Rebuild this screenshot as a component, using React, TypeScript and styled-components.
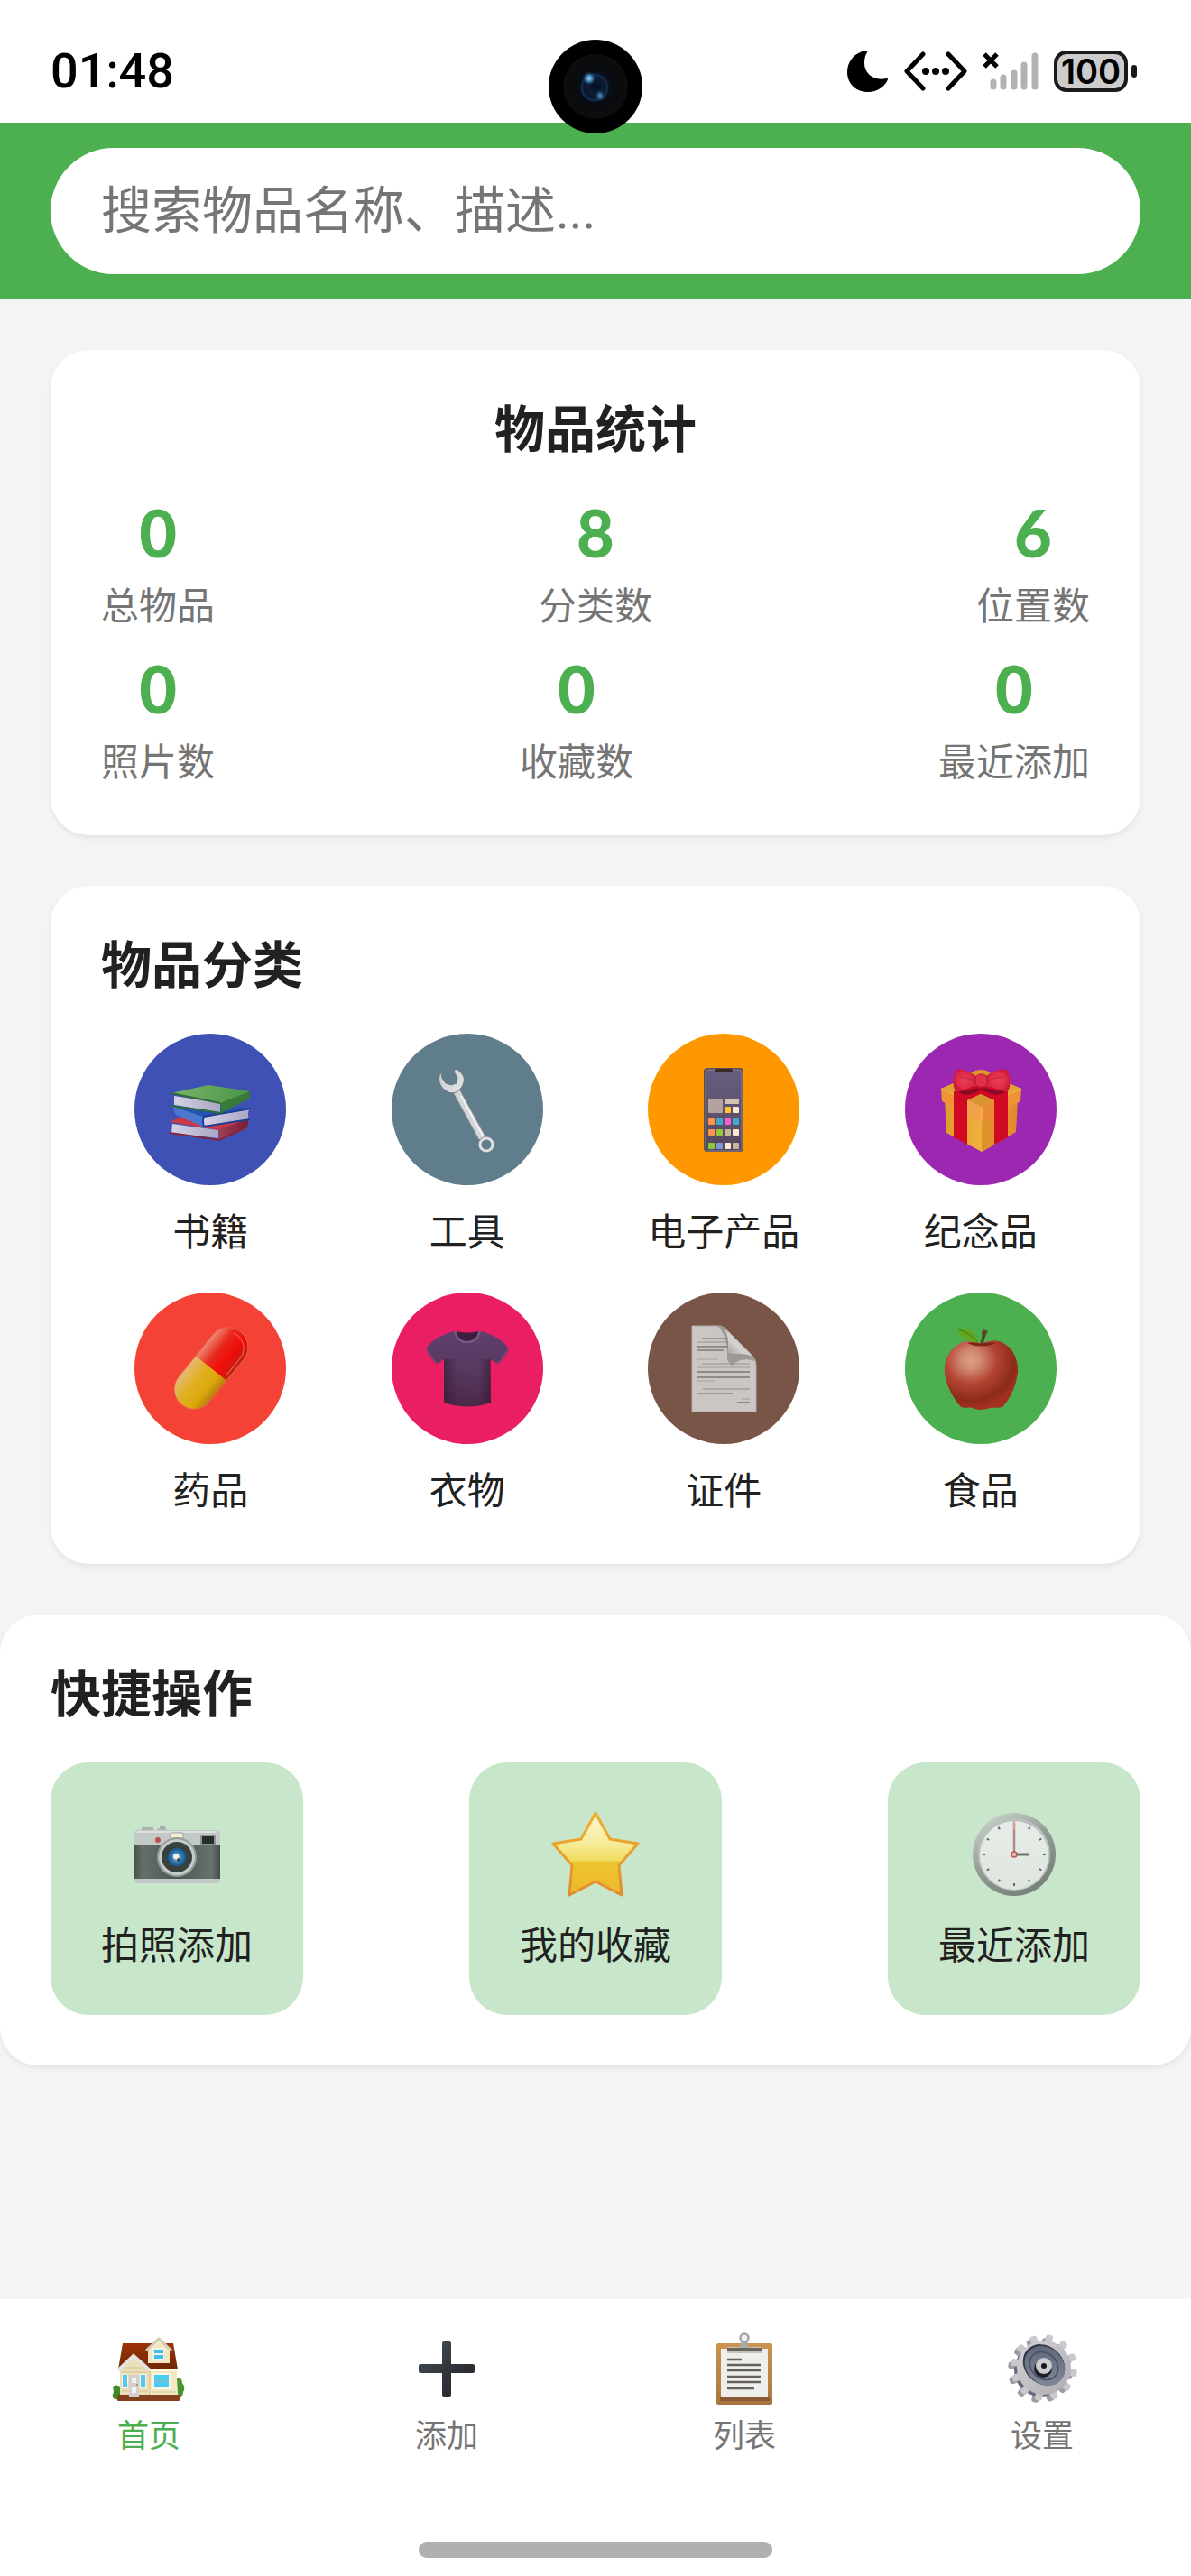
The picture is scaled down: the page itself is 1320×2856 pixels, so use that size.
import React, { useState } from 'react';
import styled, { createGlobalStyle } from 'styled-components';

const stats = [
  [
    { label: '总物品', value: 0 },
    { label: '分类数', value: 8 },
    { label: '位置数', value: 6 },
  ],
  [
    { label: '照片数', value: 0 },
    { label: '收藏数', value: 0 },
    { label: '最近添加', value: 0 },
  ],
];

const BooksIcon = () => (
  <svg viewBox="0 0 98 98" aria-hidden="true">
    <defs>
      <linearGradient id="bookGreen" x1="0" x2="1">
        <stop offset="0" stopColor="#78b468" />
        <stop offset="1" stopColor="#4a9648" />
      </linearGradient>
      <linearGradient id="bookRed" x1="0" x2="1">
        <stop offset="0" stopColor="#a04058" />
        <stop offset="1" stopColor="#7c1c34" />
      </linearGradient>
      <linearGradient id="bookPages" x1="0" x2="1">
        <stop offset="0" stopColor="#d4d2e6" />
        <stop offset="1" stopColor="#a9a7c2" />
      </linearGradient>
    </defs>
    <path d="M4 63 L14 58 L48 64 L92 59 L59 72 Z" fill="#c8394a" />
    <path d="M58 71 L91 60 Q92 65 89 69 L59 83 Z" fill="url(#bookRed)" />
    <path d="M7 65 L58 72 L58 81 L6 75 Z" fill="url(#bookPages)" />
    <path d="M4 75 L59 83 L89 69" fill="none" stroke="#86243c" strokeWidth="2" />
    <path d="M8 46 L40 42 L94 48 L41 58 Z" fill="#2455b4" />
    <path d="M8 46 L41 57 L41 68 L11 55 Q8 51 8 46 Z" fill="#4a78cf" />
    <path d="M42 57 L92 49 Q90 54 92 60 L42 67 Z" fill="url(#bookPages)" />
    <path d="M94 48 L42 57 Q40 62 42 68 L93 60" fill="none" stroke="#1c3f94" strokeWidth="2" />
    <path d="M60 41 L93 29 L93 37 L61 53 Z" fill="#377a39" />
    <path d="M9 34 L60 42 L60 52 L9 44 Z" fill="url(#bookPages)" />
    <path d="M6 31 L47 22 L93 29 L60 42 Z" fill="url(#bookGreen)" />
    <path d="M6 45 L60 53 L63 52 M6 31 L60 42" fill="none" stroke="#2f6c35" strokeWidth="2" />
  </svg>
);

const WrenchIcon = () => (
  <svg viewBox="0 0 98 98" aria-hidden="true">
    <defs>
      <linearGradient id="steel" x1="0" y1="0" x2="1" y2="1">
        <stop offset="0" stopColor="#c4c8cb" />
        <stop offset="1" stopColor="#e6e8ea" />
      </linearGradient>
    </defs>
    <path d="M32 28 L40 26 L69 79 L62 83 Z" fill="#d3d7da" stroke="#84898c" strokeWidth="1" />
    <path
      d="M20 8 C15 14 18 24 25 28 C28 31 34 32 38 29 C45 24 47 16 44 11 C42 8 39 5 36 4 L34 7 L38 14 L37 20 L31 22 L25 20 L21 14 Z"
      fill="url(#steel)"
      stroke="#6e7679"
      strokeWidth="1"
    />
    <path d="M42 34 L66 78" stroke="#f0f2f3" strokeWidth="2" />
    <circle cx="70" cy="88" r="7" fill="none" stroke="#777e82" strokeWidth="4" />
    <circle cx="70" cy="88" r="7" fill="none" stroke="#dde0e2" strokeWidth="3" />
  </svg>
);

const phoneApps = [
  [50, 46, '#ffc530'], [59, 46, '#fce8d0'],
  [32, 59, '#ff944d'], [41, 59, '#40a8c8'], [50, 59, '#f060d0'], [59, 59, '#40a8c8'],
  [32, 71, '#ff944d'], [41, 71, '#8fc93a'], [50, 71, '#c8b49c'], [59, 71, '#fce8d0'],
  [32, 86, '#8fc93a'], [41, 86, '#7a98d0'], [50, 86, '#fce8d0'], [59, 86, '#c8b49c'],
] as const;

const PhoneIcon = () => (
  <svg viewBox="0 0 98 98" aria-hidden="true">
    <defs>
      <linearGradient id="phoneScreen" x1="0" y1="0" x2="0" y2="1">
        <stop offset="0" stopColor="#685c80" />
        <stop offset="1" stopColor="#54485e" />
      </linearGradient>
    </defs>
    <rect x="27" y="3" width="44" height="93" rx="4" fill="#5c4d4e" />
    <rect x="29" y="5" width="40" height="90" rx="3" fill="url(#phoneScreen)" stroke="#8a7f92" strokeWidth="1" />
    <rect x="39" y="4" width="20" height="4" rx="2" fill="#3a2a26" />
    <rect x="32" y="37" width="16" height="16" rx="1" fill="#b3a29f" />
    <rect x="50" y="37" width="16" height="6" rx="1" fill="#d5c2b0" />
    {phoneApps.map(([x, y, fill]) => (
      <rect key={`${x}-${y}`} x={x} y={y} width="7" height="7" rx="1" fill={fill} />
    ))}
  </svg>
);

const GiftIcon = () => (
  <svg viewBox="0 0 98 98" aria-hidden="true">
    <defs>
      <linearGradient id="boxSide" x1="0" x2="1">
        <stop offset="0" stopColor="#e39a2c" />
        <stop offset="0.5" stopColor="#eeb03e" />
        <stop offset="1" stopColor="#e2862a" />
      </linearGradient>
      <radialGradient id="bowRed">
        <stop offset="0" stopColor="#ea4058" />
        <stop offset="0.7" stopColor="#e02c48" />
        <stop offset="1" stopColor="#cc1a38" />
      </radialGradient>
    </defs>
    <path d="M9 38 L90 38 L88 74 L50 96 L11 75 Z" fill="url(#boxSide)" />
    <path d="M50 62 L64 54 L64 88 L50 96 Z" fill="#e0912c" />
    <path d="M5 26 L49 7 L94 26 L93 40 L50 63 L6 40 Z" fill="#f09238" />
    <path d="M5 26 L49 7 L94 26 L50 46 Z" fill="#e2a336" />
    <path d="M5 26 L50 46 L94 26" fill="none" stroke="#f6b83a" strokeWidth="1" />
    <path d="M19 29 L49 21 L79 29 L79 80 L64 88 L64 39 L49 32 L34 39 L34 88 L19 80 Z" fill="#cf0a22" />
    <path d="M34 39 L49 32 L64 39 L50 46 Z" fill="#d99433" />
    <path d="M34 39 L50 46 L50 63 L34 55 Z" fill="#f3a04a" />
    <path d="M64 39 L50 46 L50 63 L64 55 Z" fill="#ea8a34" />
    <path d="M50 46 V62" stroke="#fbc244" strokeWidth="1" />
    <path d="M24 30 Q49 21 76 30 Q66 35 56 30 L49 27 L42 31 Q32 35 24 30 Z" fill="#8c0a28" />
    <path d="M38 8 Q49 2 60 8 L56 12 H42 Z" fill="#dd9a2c" />
    <path d="M22 5 C28 3 38 8 44 12 L44 22 C36 25 28 29 21 29 C17 22 18 12 22 5 Z" fill="url(#bowRed)" />
    <path d="M78 5 C71 3 61 8 55 12 L55 22 C62 25 71 29 79 29 C83 22 82 12 78 5 Z" fill="url(#bowRed)" />
    <path d="M26 13 Q34 14 43 17 M73 13 Q64 14 56 17" fill="none" stroke="#c42440" strokeWidth="1" />
    <rect x="43" y="10" width="13" height="14" rx="5" fill="#e0304a" stroke="#b31a34" strokeWidth="1" />
  </svg>
);

const PillIcon = () => (
  <svg viewBox="0 0 98 98" aria-hidden="true">
    <defs>
      <linearGradient id="pillRed" x1="0" y1="0" x2="0" y2="1">
        <stop offset="0" stopColor="#ee8a74" />
        <stop offset="0.35" stopColor="#e8281e" />
        <stop offset="0.7" stopColor="#f00c08" />
        <stop offset="1" stopColor="#b82418" />
      </linearGradient>
      <linearGradient id="pillYellow" x1="0" y1="0" x2="0" y2="1">
        <stop offset="0" stopColor="#e8b878" />
        <stop offset="0.4" stopColor="#e0b020" />
        <stop offset="0.75" stopColor="#dba80c" />
        <stop offset="1" stopColor="#b87c0c" />
      </linearGradient>
    </defs>
    <g transform="rotate(-51 50 49)">
      <path d="M50 27 H80 A22 22 0 0 1 80 71 H50 Z" fill="url(#pillRed)" />
      <path d="M50 27 H20 A22 22 0 0 0 20 71 H50 Z" fill="url(#pillYellow)" />
      <rect x="-2" y="27" width="104" height="44" rx="22" fill="none" stroke="#e8604a" strokeWidth="1" />
      <path d="M54 67 H79 A18 18 0 0 0 96 44" fill="none" stroke="#f4685c" strokeWidth="1" />
    </g>
  </svg>
);

const ShirtIcon = () => (
  <svg viewBox="0 0 98 98" aria-hidden="true">
    <defs>
      <linearGradient id="shirtBody" x1="0" y1="0" x2="0" y2="1">
        <stop offset="0" stopColor="#60406c" />
        <stop offset="0.5" stopColor="#573860" />
        <stop offset="1" stopColor="#4a2848" />
      </linearGradient>
      <linearGradient id="shirtShade" x1="0" x2="1">
        <stop offset="0" stopColor="#30142c" stopOpacity="0.5" />
        <stop offset="0.3" stopColor="#30142c" stopOpacity="0" />
        <stop offset="0.75" stopColor="#30142c" stopOpacity="0" />
        <stop offset="1" stopColor="#30142c" stopOpacity="0.5" />
      </linearGradient>
    </defs>
    <path
      d="M34 8 C20 12 9 17 3 28 Q8 38 15 44 L23 39 L23 87 Q49 96 75 87 L74 39 L83 44 Q90 38 95 28 C89 17 78 12 64 8 Q49 14 34 8 Z"
      fill="url(#shirtBody)"
    />
    <path d="M23 39 H75 V87 Q49 96 23 87 Z" fill="url(#shirtShade)" />
    <path d="M37 8 Q49 11 61 8 Q59 19 49 19 Q39 19 37 8 Z" fill="#3c2040" />
    <path d="M35 8 Q38 20 49 20 Q60 20 63 8" fill="none" stroke="#7c5a86" strokeWidth="2" />
    <path d="M4 28 Q9 36 15 43 M94 28 Q89 36 83 43" fill="none" stroke="#7a5684" strokeWidth="1" />
  </svg>
);

const docLines = [
  [25, 54, 16, '#8b8785'], [19, 54, 20, '#aaa5a3'], [19, 54, 25, '#7f7b79'], [19, 49, 29, '#7f7b79'],
  [19, 43, 39, '#b4afad'], [25, 78, 44, '#aaa5a3'], [19, 78, 48, '#b0abaa'], [19, 78, 53, '#7a7674'],
  [19, 78, 59, '#7a7674'], [19, 39, 63, '#b0abaa'], [26, 78, 72, '#a39e9c'], [19, 59, 77, '#8b8785'],
  [69, 78, 83, '#b0abaa'], [64, 78, 87, '#7a7674'],
] as const;

const DocumentIcon = () => (
  <svg viewBox="0 0 98 98" aria-hidden="true">
    <defs>
      <linearGradient id="foldShade" x1="0" y1="1" x2="1" y2="0">
        <stop offset="0" stopColor="#8c8886" />
        <stop offset="0.4" stopColor="#d6d2d1" />
        <stop offset="1" stopColor="#b9b5b4" />
      </linearGradient>
    </defs>
    <path
      d="M14 2 H46 Q51 4 54 8 L80 34 Q85 39 85 45 V97 H14 Z"
      fill="#cbc5c4"
      stroke="#b4adab"
      strokeWidth="1"
    />
    {docLines.map(([x1, x2, y, stroke]) => (
      <line key={y} x1={x1} x2={x2} y1={y} y2={y} stroke={stroke} strokeWidth="1.5" />
    ))}
    <path d="M42 2 Q54 12 53 40 L58 46 Q68 36 85 41 L80 34 L54 32 L54 8 L47 2 Z" fill="#8d8988" opacity="0.75" />
    <path d="M49 4 Q56 14 54 32 Q68 30 81 36 Z" fill="url(#foldShade)" />
  </svg>
);

const AppleIcon = () => (
  <svg viewBox="0 0 98 98" aria-hidden="true">
    <defs>
      <radialGradient id="appleSkin" cx="0.36" cy="0.28" r="0.7">
        <stop offset="0" stopColor="#dca088" />
        <stop offset="0.2" stopColor="#d08872" />
        <stop offset="0.5" stopColor="#b44432" />
        <stop offset="0.85" stopColor="#8c2a1a" />
        <stop offset="1" stopColor="#a43020" />
      </radialGradient>
    </defs>
    <path
      d="M49 22 C42 17 33 18 27 21 C14 27 8 40 9 54 C10 68 20 84 26 91 C32 95 36 91 40 93 C46 96 54 95 59 93 C64 92 69 94 74 91 C82 82 88 68 90 54 C91 40 85 26 72 20 C64 17 56 19 49 22 Z"
      fill="url(#appleSkin)"
    />
    <path d="M34 21 Q49 28 66 21 Q58 19 49 22 Q42 19 34 21 Z" fill="#7c2418" />
    <path d="M48 22 Q51 14 50 9 L52 6 L57 8 Q53 14 52 22 Z" fill="#5c4428" />
    <path d="M23 6 C33 3 45 8 46 20 C36 21 27 16 23 6 Z" fill="#62a81e" />
    <path d="M24 6 Q36 9 46 20" fill="none" stroke="#3f7c14" strokeWidth="1" />
  </svg>
);

const CameraIcon = () => (
  <svg viewBox="0 0 98 98" aria-hidden="true">
    <defs>
      <linearGradient id="leather" x1="0" x2="1">
        <stop offset="0" stopColor="#4a524e" />
        <stop offset="0.1" stopColor="#66706b" />
        <stop offset="0.5" stopColor="#4c5550" />
        <stop offset="0.9" stopColor="#68726d" />
        <stop offset="1" stopColor="#454d49" />
      </linearGradient>
      <radialGradient id="lensGlass">
        <stop offset="0" stopColor="#f4f4ee" />
        <stop offset="0.3" stopColor="#82a4bc" />
        <stop offset="0.5" stopColor="#2c7cb8" />
        <stop offset="0.9" stopColor="#1f567f" />
        <stop offset="1" stopColor="#2c3c44" />
      </radialGradient>
    </defs>
    <rect x="10" y="19" width="13" height="5" rx="1" fill="#aab2ae" />
    <rect x="27" y="20" width="11" height="4" fill="#b6beba" />
    <rect x="30" y="18" width="6" height="3" fill="#a3aca7" />
    <rect x="2" y="22" width="95" height="59" rx="4" fill="#c3c9c6" />
    <rect x="2" y="39" width="95" height="37" fill="url(#leather)" />
    <path d="M5 24 H94" stroke="#dde2df" strokeWidth="2" />
    <rect x="42" y="25" width="14" height="6" rx="1" fill="#f6efcf" stroke="#98a09b" strokeWidth="1" />
    <circle cx="28" cy="33" r="3" fill="#b8504c" />
    <rect x="75" y="27" width="17" height="11" fill="#8d9591" />
    <rect x="77" y="29" width="13" height="8" fill="#262d2a" />
    <circle cx="49" cy="52" r="22" fill="#959d99" />
    <circle cx="49" cy="52" r="20" fill="#c5cbc8" />
    <circle cx="49" cy="52" r="17" fill="#39413e" />
    <circle cx="49" cy="52" r="11" fill="url(#lensGlass)" />
    <circle cx="51" cy="55" r="2" fill="#38454c" />
    <circle cx="48" cy="51" r="3" fill="#f6f4ea" />
  </svg>
);

const StarIcon = () => (
  <svg viewBox="0 0 98 98" aria-hidden="true">
    <defs>
      <linearGradient id="starFill" x1="0" y1="0" x2="0" y2="1">
        <stop offset="0" stopColor="#fbf6d2" />
        <stop offset="0.35" stopColor="#f7ee9e" />
        <stop offset="0.58" stopColor="#f0dc5e" />
        <stop offset="0.6" stopColor="#edc430" />
        <stop offset="1" stopColor="#edb92c" />
      </linearGradient>
      <linearGradient id="starEdge" x1="0" y1="0" x2="0" y2="1">
        <stop offset="0" stopColor="#efb02c" />
        <stop offset="1" stopColor="#e28c30" />
      </linearGradient>
    </defs>
    <path
      d="M49 3 L65 32 L96 37 L75 61 L78 94 L49 79 L20 94 L23 61 L2 37 L33 32 Z"
      fill="url(#starFill)"
      stroke="url(#starEdge)"
      strokeWidth="3"
      strokeLinejoin="round"
    />
  </svg>
);

const ClockIcon = () => (
  <svg viewBox="0 0 98 98" aria-hidden="true">
    <defs>
      <linearGradient id="clockRim" x1="0.2" y1="0" x2="0.8" y2="1">
        <stop offset="0" stopColor="#c9d1cb" />
        <stop offset="0.5" stopColor="#8f9893" />
        <stop offset="1" stopColor="#747d78" />
      </linearGradient>
      <linearGradient id="clockFace" x1="0" y1="0" x2="0" y2="1">
        <stop offset="0" stopColor="#e6ede8" />
        <stop offset="1" stopColor="#dfe6e0" />
      </linearGradient>
    </defs>
    <circle cx="49" cy="49" r="46" fill="url(#clockRim)" />
    <circle cx="49" cy="49" r="40" fill="#bac2bd" />
    <circle cx="49" cy="50" r="38" fill="url(#clockFace)" />
    {Array.from({ length: 12 }, (_, i) => (
      <line key={i} x1="49" x2="49" y1="14" y2="17" stroke="#5f6864" strokeWidth="2" transform={`rotate(${i * 30} 49 49)`} />
    ))}
    <line x1="49" x2="66" y1="49" y2="49" stroke="#6a726e" strokeWidth="3" />
    <line x1="49" x2="49" y1="49" y2="14" stroke="#b08a80" strokeWidth="2.5" />
    <line x1="49" x2="49" y1="22" y2="12" stroke="#e09a90" strokeWidth="2" />
    <circle cx="49" cy="49" r="3" fill="#d8c0b8" stroke="#c4574c" strokeWidth="1.5" />
  </svg>
);

const HouseIcon = () => (
  <svg viewBox="0 0 84 84" aria-hidden="true">
    <defs>
      <linearGradient id="roof" x1="0" y1="0" x2="0" y2="1">
        <stop offset="0" stopColor="#9c3206" />
        <stop offset="1" stopColor="#702808" />
      </linearGradient>
    </defs>
    <path d="M73 51 Q79 51 79 57 Q83 62 80 67 Q80 73 74 73 Z" fill="#4a9430" />
    <path d="M2 61 Q6 58 10 61 V74 Q5 77 2 73 Q1 70 3 67 Z" fill="#3f8a28" />
    <rect x="7" y="70" width="69" height="7" rx="1" fill="#84401c" />
    <rect x="10" y="42" width="63" height="28" fill="#f3e8c2" />
    <path d="M13 13 H69 L74 42 H8 Z" fill="url(#roof)" />
    <path d="M43 42 H74 V44 H43 Z" fill="#fff6dc" />
    <path d="M41 20 L53 10 L65 20 V35 H41 Z" fill="#f3e8c2" />
    <path d="M39 21 L53 8 L67 21" fill="none" stroke="#d2ccbc" strokeWidth="3" />
    <rect x="46" y="18" width="13" height="13" fill="#f4f1e8" />
    <path d="M48 20 H58 V24 H48 Z M48 26 H58 V30 H48 Z" fill="#3fc0e8" />
    <path d="M10 42 L25 27 L43 43 V70 H10 Z" fill="#eadfb8" />
    <path d="M15 40 H37 M12 45 H41 M12 66 H41 M46 67 H72" stroke="#d3c596" strokeWidth="1" />
    <path d="M43 44 V70" stroke="#cbbd90" strokeWidth="1" />
    <path d="M8 43 L25 27 L43 43" fill="none" stroke="#e6e3de" strokeWidth="4" />
    <path d="M12 47 H19 V63 H12 Z M32 47 H39 V63 H32 Z M46 46 H67 V64 H46 Z" fill="#f7f4ea" />
    <path d="M13 48 H18 V62 H13 Z M33 48 H38 V62 H33 Z M48 48 H64 V62 H48 Z" fill="#4ccbf0" />
    <path d="M48 55 H64 M13 55 H18 M33 55 H38" stroke="#90b8c4" strokeWidth="1.5" />
    <rect x="20" y="48" width="11" height="24" fill="#d3ced0" />
    <path d="M23 51 H28 V57 H23 Z M23 61 H28 V68 H23 Z" fill="#f2f0f0" />
    <circle cx="29" cy="59" r="1" fill="#b08838" />
  </svg>
);

const PlusIcon = () => (
  <svg viewBox="0 0 84 84" aria-hidden="true">
    <defs>
      <linearGradient id="plusInk" x1="0" y1="0" x2="1" y2="1">
        <stop offset="0" stopColor="#4a525b" />
        <stop offset="0.5" stopColor="#32363c" />
        <stop offset="1" stopColor="#232328" />
      </linearGradient>
    </defs>
    <path
      d="M39 11 H45 Q47 11 47 13 V36 H71 Q73 36 73 38 V44 Q73 46 71 46 H47 V70 Q47 72 45 72 H39 Q37 72 37 70 V46 H13 Q11 46 11 44 V38 Q11 36 13 36 H37 V13 Q37 11 39 11 Z"
      fill="url(#plusInk)"
    />
  </svg>
);

const ClipboardIcon = () => (
  <svg viewBox="0 0 84 84" aria-hidden="true">
    <defs>
      <linearGradient id="board" x1="0" y1="0" x2="0" y2="1">
        <stop offset="0" stopColor="#cc944e" />
        <stop offset="1" stopColor="#aa7440" />
      </linearGradient>
    </defs>
    <rect x="11" y="13" width="62" height="68" rx="2" fill="url(#board)" />
    <path d="M15 73 H70 V77 H15 Z" fill="#8a5a34" />
    <rect x="16" y="19" width="52" height="54" fill="#eeeeec" />
    <path d="M23 17 H61 V24 H23 Z" fill="#c5c2bc" />
    <path d="M23 18 H61 V21 H23 Z" fill="#696660" />
    <path d="M39 9 H45 L47 18 H37 Z" fill="#a9aaa8" />
    <circle cx="42" cy="7" r="4.5" fill="#f1f1f1" stroke="#a4a5a3" strokeWidth="2.5" />
    <path
      d="M23 31 H39 M23 37 H60 M23 43 H60 M23 50 H60 M23 56 H60 M23 63 H53"
      stroke="#64615c"
      strokeWidth="2.5"
    />
  </svg>
);

const teeth = Array.from({ length: 12 }, (_, i) => i * 30 + 10);

const GearIcon = () => (
  <svg viewBox="0 0 84 84" aria-hidden="true">
    <defs>
      <linearGradient id="gearFace" x1="0" y1="0" x2="1" y2="1">
        <stop offset="0" stopColor="#d4d3d6" />
        <stop offset="1" stopColor="#aeacb1" />
      </linearGradient>
      <linearGradient id="gearDish" x1="0" y1="0" x2="1" y2="1">
        <stop offset="0" stopColor="#5a6374" />
        <stop offset="1" stopColor="#868da0" />
      </linearGradient>
    </defs>
    <g fill="#9c9ba6" transform="translate(-4 3)">
      {teeth.map(a => (
        <rect key={a} x="40" y="4" width="8" height="12" rx="3" transform={`rotate(${a} 44 40)`} />
      ))}
      <circle cx="44" cy="40" r="29" fill="#646b80" />
    </g>
    <g fill="#c9c8cc">
      {teeth.map(a => (
        <rect key={a} x="40" y="3" width="8" height="12" rx="3" transform={`rotate(${a} 44 40)`} />
      ))}
      <circle cx="44" cy="40" r="30" fill="url(#gearFace)" />
    </g>
    <ellipse cx="44" cy="37" rx="25" ry="21" transform="rotate(42 44 37)" fill="#343a48" />
    <ellipse cx="45" cy="38" rx="24" ry="20" transform="rotate(42 45 38)" fill="url(#gearDish)" />
    <ellipse cx="44" cy="38" rx="17" ry="14" transform="rotate(42 44 38)" fill="none" stroke="#4a5161" strokeWidth="1.5" />
    <circle cx="43" cy="41" r="10" fill="#1e2026" />
    <circle cx="44" cy="38" r="9" fill="#cdcdd0" />
    <circle cx="44" cy="38" r="3" fill="#17181c" />
  </svg>
);

const LensDot = () => (
  <svg viewBox="0 0 104 104" aria-hidden="true">
    <defs>
      <radialGradient id="frontLens">
        <stop offset="0" stopColor="#050d20" />
        <stop offset="0.3" stopColor="#0c1c34" />
        <stop offset="0.6" stopColor="#080c14" />
        <stop offset="1" stopColor="#0b0b0c" />
      </radialGradient>
      <radialGradient id="lensSpot">
        <stop offset="0" stopColor="#a0dcf8" />
        <stop offset="0.45" stopColor="#3a7cae" />
        <stop offset="1" stopColor="#0c2038" stopOpacity="0" />
      </radialGradient>
    </defs>
    <circle cx="52" cy="52" r="52" fill="#000" />
    <circle cx="52" cy="52" r="36" fill="#0d0d0d" />
    <circle cx="52" cy="52" r="29" fill="url(#frontLens)" />
    <circle cx="51" cy="53" r="14" fill="none" stroke="#10284a" strokeWidth="3" />
    <ellipse cx="45" cy="43" rx="8" ry="8" fill="url(#lensSpot)" />
    <ellipse cx="57" cy="62" rx="6" ry="7" fill="url(#lensSpot)" opacity="0.6" />
  </svg>
);

const categories = [
  { name: '书籍', color: '#3f51b5', Icon: BooksIcon },
  { name: '工具', color: '#607d8b', Icon: WrenchIcon },
  { name: '电子产品', color: '#ff9800', Icon: PhoneIcon },
  { name: '纪念品', color: '#9c27b0', Icon: GiftIcon },
  { name: '药品', color: '#f44336', Icon: PillIcon },
  { name: '衣物', color: '#e91e63', Icon: ShirtIcon },
  { name: '证件', color: '#795548', Icon: DocumentIcon },
  { name: '食品', color: '#4caf50', Icon: AppleIcon },
];

const actions = [
  { name: '拍照添加', Icon: CameraIcon },
  { name: '我的收藏', Icon: StarIcon },
  { name: '最近添加', Icon: ClockIcon },
];

const tabs = [
  { name: '首页', Icon: HouseIcon },
  { name: '添加', Icon: PlusIcon },
  { name: '列表', Icon: ClipboardIcon },
  { name: '设置', Icon: GearIcon },
];

function App() {
  const [keyword, setKeyword] = useState('');
  const [tab, setTab] = useState('首页');

  return (
    <Page>
      <GlobalStyle />
      <StatusBar>
        <Time>01:48</Time>
        <Lens>
          <LensDot />
        </Lens>
        <StatusIcons>
          <svg width="46" height="48" viewBox="0 0 46 48" aria-hidden="true">
            <path d="M21 1 C8 3 0 13 0 25 C0 38 10 47 23 47 C33 47 42 41 45 33 Q45 31 43 32 C30 35 19 27 19 15 C19 10 20 6 22 3 Q23 1 21 1 Z" />
          </svg>
          <svg width="70" height="44" viewBox="0 0 70 44" aria-hidden="true">
            <path d="M21 3 L3 22 L21 41 M49 3 L67 22 L49 41" fill="none" stroke="#000" strokeWidth="5" strokeLinecap="round" strokeLinejoin="round" />
            <circle cx="24" cy="22" r="4" />
            <circle cx="35" cy="22" r="4" />
            <circle cx="46" cy="22" r="4" />
          </svg>
          <svg width="62" height="44" viewBox="0 0 62 44" aria-hidden="true">
            <path d="M2 3 L16 17 M16 3 L2 17" stroke="#000" strokeWidth="5" />
            <path d="M12 34 V39 M23 29 V39 M35 24 V39 M46 15 V39 M58 5 V39" stroke="#b2b2b2" strokeWidth="7" strokeLinecap="round" />
          </svg>
          <Battery>
            <Charge>100</Charge>
            <Terminal />
          </Battery>
        </StatusIcons>
      </StatusBar>

      <Header>
        <SearchInput
          type="text"
          aria-label="搜索物品"
          placeholder="搜索物品名称、描述..."
          value={keyword}
          onChange={e => setKeyword(e.target.value)}
        />
      </Header>

      <Main>
        <Card>
          <CardTitle $center>物品统计</CardTitle>
          <StatRows>
            {stats.map((row, i) => (
              <Row key={i}>
                {row.map(item => (
                  <Stat key={item.label}>
                    <StatValue>{item.value}</StatValue>
                    <StatLabel>{item.label}</StatLabel>
                  </Stat>
                ))}
              </Row>
            ))}
          </StatRows>
        </Card>

        <Card>
          <CardTitle>物品分类</CardTitle>
          <CategoryGrid>
            {categories.map(({ name, color, Icon }) => (
              <Category key={name} type="button">
                <Circle $color={color}>
                  <Icon />
                </Circle>
                {name}
              </Category>
            ))}
          </CategoryGrid>
        </Card>

        <Card $wide>
          <CardTitle>快捷操作</CardTitle>
          <Row>
            {actions.map(({ name, Icon }) => (
              <Action key={name} type="button">
                <Icon />
                {name}
              </Action>
            ))}
          </Row>
        </Card>
      </Main>

      <Footer>
        <Tabs>
          {tabs.map(({ name, Icon }) => (
            <Tab key={name} type="button" $active={tab === name} onClick={() => setTab(name)}>
              <Icon />
              {name}
            </Tab>
          ))}
        </Tabs>
        <HomeIndicator />
      </Footer>
    </Page>
  );
}

export default App;

const GlobalStyle = createGlobalStyle`
  * {
    box-sizing: border-box;
  }

  body {
    margin: 0;
    background: #f4f4f4;
    color: #212121;
    font-family: 'Roboto', 'Noto Sans CJK SC', sans-serif;
  }

  button {
    border: 0;
    padding: 0;
    background: none;
    color: inherit;
    font: inherit;
    cursor: pointer;
  }

  svg {
    display: block;
    flex-shrink: 0;
  }
`;

const Page = styled.div`
  min-height: 100vh;
  display: flex;
  flex-direction: column;
`;

const StatusBar = styled.div`
  position: relative;
  display: flex;
  align-items: center;
  justify-content: space-between;
  height: 136px;
  padding: 22px 60px 0 56px;
  background: #fff;
`;

const Time = styled.span`
  color: #000;
  font-size: 54px;
  font-weight: 500;
  line-height: 66px;
`;

const Lens = styled.div`
  position: absolute;
  top: 44px;
  left: 50%;
  width: 104px;
  margin-left: -52px;
`;

const StatusIcons = styled.div`
  display: flex;
  align-items: center;
  gap: 17px;
`;

const Battery = styled.div`
  display: flex;
  align-items: center;
  gap: 4px;
`;

const Charge = styled.span`
  display: flex;
  align-items: center;
  justify-content: center;
  width: 82px;
  height: 46px;
  border: 4px solid #1a1a1a;
  border-radius: 14px;
  background: #ccc;
  color: #000;
  font-family: 'Inter', sans-serif;
  font-size: 38px;
  font-weight: 600;
  line-height: 38px;
`;

const Terminal = styled.span`
  width: 6px;
  height: 14px;
  border-radius: 3px;
  background: #1a1a1a;
`;

const Header = styled.header`
  padding: 28px 56px;
  background: #4caf50;
`;

const SearchInput = styled.input`
  display: block;
  width: 100%;
  height: 140px;
  padding: 0 56px;
  border: 0;
  border-radius: 70px;
  outline: none;
  background: #fff;
  color: #212121;
  font-family: inherit;
  font-size: 56px;
  line-height: 66px;

  &::placeholder {
    color: #757575;
    opacity: 1;
  }
`;

const Main = styled.main`
  display: flex;
  flex-direction: column;
  gap: 56px;
  padding: 56px 0;
`;

const Card = styled.section<{ $wide?: boolean }>`
  margin: 0 ${({ $wide }) => ($wide ? '0' : '56px')};
  padding: 56px;
  border-radius: 42px;
  background: #fff;
  box-shadow: 0 3px 6px rgba(0, 0, 0, 0.07);
`;

const CardTitle = styled.h2<{ $center?: boolean }>`
  margin: 0 0 42px;
  font-size: 56px;
  font-weight: 700;
  line-height: 66px;
  text-align: ${({ $center }) => ($center ? 'center' : 'left')};
`;

const StatRows = styled.div`
  display: grid;
  gap: 28px;
`;

const Row = styled.div`
  display: flex;
  justify-content: space-between;
`;

const Stat = styled.div`
  display: flex;
  flex-direction: column;
  align-items: center;
  gap: 20px;
`;

const StatValue = styled.strong`
  color: #4caf50;
  font-family: 'Lato', sans-serif;
  font-size: 72px;
  font-weight: 900;
  line-height: 76px;
`;

const StatLabel = styled.span`
  color: #757575;
  font-size: 42px;
  line-height: 49px;
`;

const CategoryGrid = styled.div`
  display: grid;
  grid-template-columns: repeat(4, 1fr);
  gap: 42px;
`;

const Category = styled.button`
  display: flex;
  flex-direction: column;
  align-items: center;
  gap: 28px;
  font-size: 42px;
  line-height: 49px;
`;

const Circle = styled.span<{ $color: string }>`
  display: flex;
  align-items: center;
  justify-content: center;
  width: 168px;
  height: 168px;
  border-radius: 50%;
  background: ${({ $color }) => $color};

  svg {
    width: 98px;
  }
`;

const Action = styled.button`
  display: flex;
  flex-direction: column;
  align-items: center;
  justify-content: center;
  gap: 28px;
  width: 280px;
  height: 280px;
  border-radius: 42px;
  background: #c8e6c9;
  font-size: 42px;
  line-height: 49px;

  svg {
    width: 98px;
  }
`;

const Footer = styled.footer`
  margin-top: auto;
  background: #fff;
`;

const Tabs = styled.nav`
  display: grid;
  grid-template-columns: repeat(4, 1fr);
  padding: 36px 0 96px;
`;

const Tab = styled.button<{ $active: boolean }>`
  display: flex;
  flex-direction: column;
  align-items: center;
  gap: 12px;
  color: ${({ $active }) => ($active ? '#4caf50' : '#757575')};
  font-size: 35px;
  line-height: 41px;

  svg {
    width: 84px;
  }
`;

const HomeIndicator = styled.div`
  width: 392px;
  height: 18px;
  margin: 0 auto 20px;
  border-radius: 9px;
  background: #b0b0b0;
`;
